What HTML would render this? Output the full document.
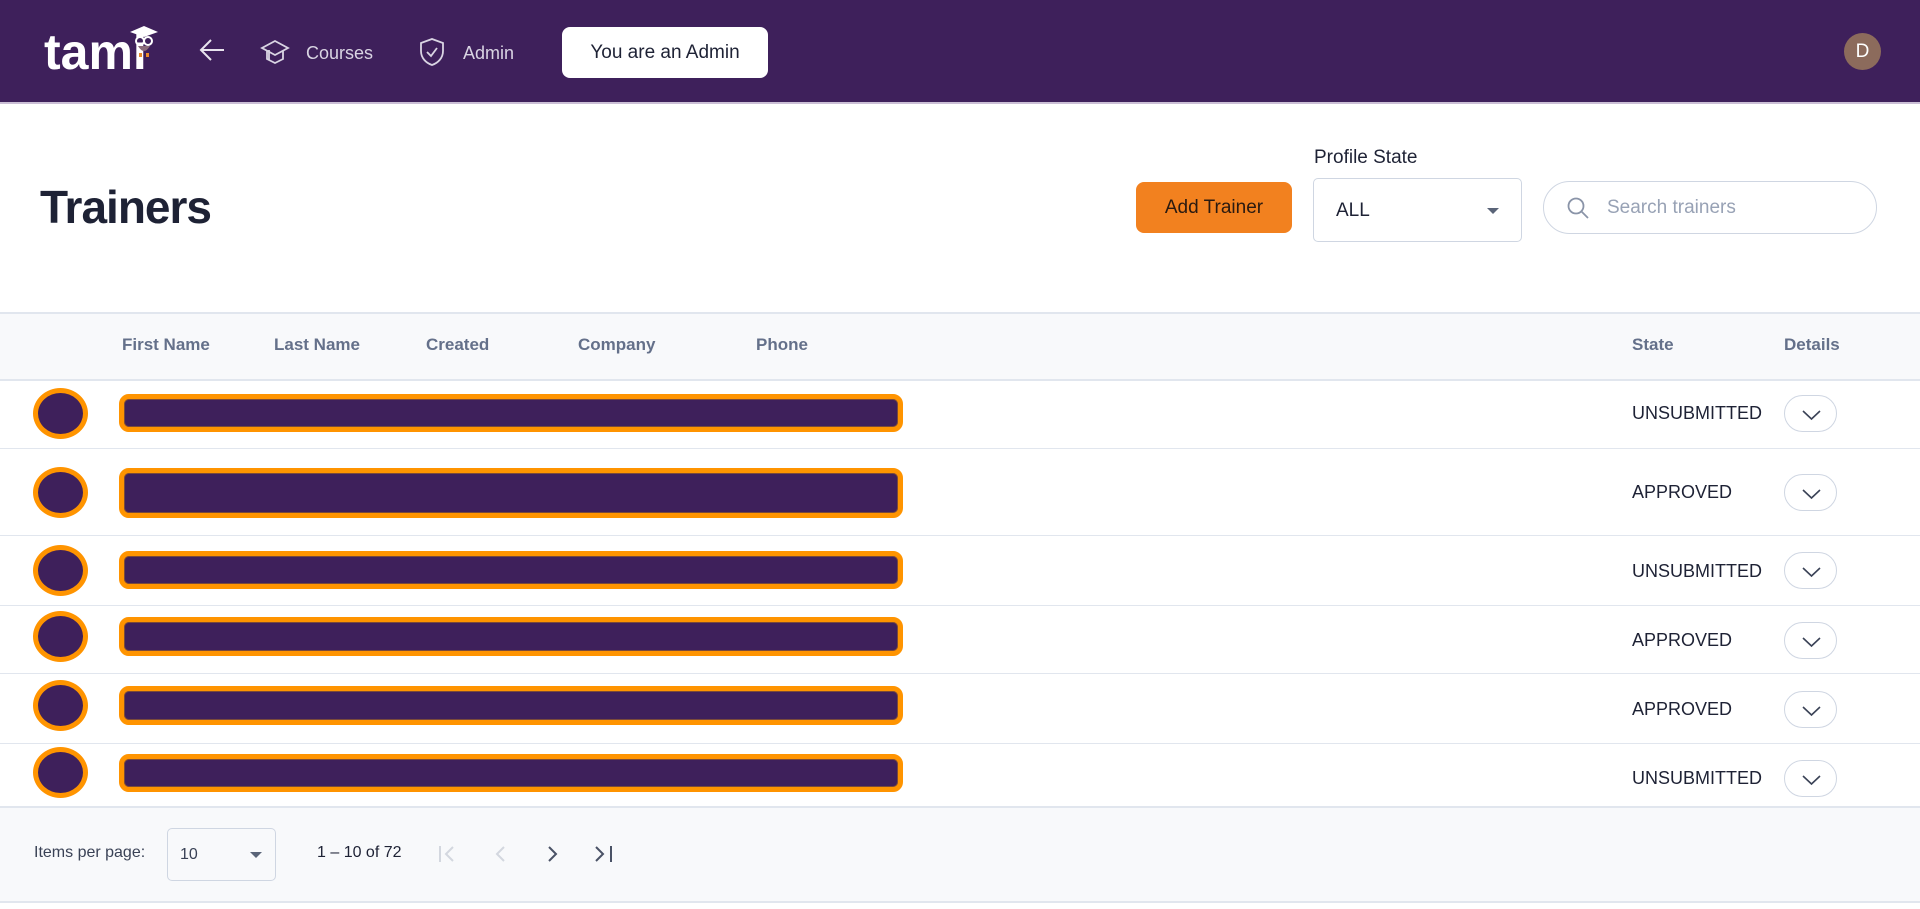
<!DOCTYPE html>
<html><head><meta charset="utf-8"><style>
*{box-sizing:border-box;margin:0;padding:0}
body{width:1920px;height:909px;overflow:hidden;background:#fff;font-family:"Liberation Sans",sans-serif;color:#1e2235;position:relative}
.a{position:absolute}
.hdr{left:0;top:0;width:1920px;height:104px;background:#3e205b;border-bottom:2px solid #cbbfd6}
.nav{color:#d9d4e3;font-size:18px}
.th{top:335px;font-size:17px;font-weight:bold;color:#64708a}
.row{left:0;width:1920px;border-bottom:1px solid #e1e6ee}
.circ{left:33px;width:55px;border:5px solid #ff9400;background:#3e205b;border-radius:50%}
.bar{left:119px;width:784px;border:5px solid #ff9400;background:#3e205b;border-radius:10px;box-shadow:inset 0 0 0 1px #7a4a3a}
.st{left:1632px;font-size:18px;color:#1e2235}
.det{left:1784px;width:53px;height:37px;border:1px solid #cfd6e2;border-radius:19px;background:#fff}
</style></head><body>
<div class="a hdr"></div>
<div class="a" style="left:44px;top:26px;color:#fff;font-size:50px;font-weight:bold;letter-spacing:0px;line-height:52px">tami</div>
<svg class="a" style="left:128px;top:24px" width="32" height="34" viewBox="0 0 32 34"><path d="M2 8 L16 2 L30 8 L16 13Z" fill="#fff"/><circle cx="12" cy="17" r="4" fill="none" stroke="#fff" stroke-width="2"/><circle cx="20" cy="17" r="4" fill="none" stroke="#fff" stroke-width="2"/><path d="M10 22 Q16 32 22 22" fill="#8a6a7a"/><rect x="11" y="29" width="3" height="4" fill="#e88a2a"/><rect x="18" y="29" width="3" height="4" fill="#e88a2a"/></svg>
<svg class="a" style="left:198px;top:38px" width="28" height="24" viewBox="0 0 28 24"><path d="M26 12H3M13 2L3 12l10 10" fill="none" stroke="#e8e4ee" stroke-width="2"/></svg>
<svg class="a" style="left:260px;top:38px" width="30" height="28" viewBox="0 0 30 28"><path d="M15 3 L28 10 L15 17 L2 10Z M7 13v8l8 4 8-4v-8 M9 12v10" fill="none" stroke="#d9d4e3" stroke-width="1.8"/></svg>
<div class="a nav" style="left:306px;top:43px">Courses</div>
<svg class="a" style="left:418px;top:37px" width="28" height="30" viewBox="0 0 28 30"><path d="M14 2 L25 6 V14 C25 21 20 26 14 28 C8 26 3 21 3 14 V6Z" fill="none" stroke="#d9d4e3" stroke-width="1.8"/><path d="M9 15l4 4 6-8" fill="none" stroke="#d9d4e3" stroke-width="1.8"/></svg>
<div class="a nav" style="left:463px;top:43px">Admin</div>
<div class="a" style="left:562px;top:27px;width:206px;height:51px;background:#fff;border-radius:8px;font-size:19px;line-height:51px;text-align:center;color:#1e2235">You are an Admin</div>
<div class="a" style="left:1844px;top:33px;width:37px;height:37px;border-radius:50%;background:#8c6b5c;color:#fff;font-size:19px;line-height:37px;text-align:center">D</div>

<div class="a" style="left:40px;top:180px;font-size:46px;font-weight:bold;letter-spacing:-1px">Trainers</div>
<div class="a" style="left:1136px;top:182px;width:156px;height:51px;background:#f2811f;border-radius:8px;font-size:19px;line-height:51px;text-align:center;color:#2a1a10;font-weight:500">Add Trainer</div>
<div class="a" style="left:1314px;top:147px;font-size:19px">Profile State</div>
<div class="a" style="left:1313px;top:178px;width:209px;height:64px;border:1px solid #cfd6e2;border-radius:5px;font-size:19px;line-height:64px;padding-left:22px">ALL</div>
<div class="a" style="left:1487px;top:208px;border-left:6px solid transparent;border-right:6px solid transparent;border-top:6px solid #5a6478"></div>
<div class="a" style="left:1543px;top:181px;width:334px;height:53px;border:1px solid #cfd6e2;border-radius:27px;font-size:19px;line-height:51px;padding-left:63px;color:#98a2b5">Search trainers</div>
<svg class="a" style="left:1566px;top:196px" width="24" height="24" viewBox="0 0 24 24"><circle cx="10" cy="10" r="7.5" fill="none" stroke="#8a94a8" stroke-width="1.8"/><path d="M15.5 15.5L22 22" stroke="#8a94a8" stroke-width="1.8"/></svg>

<div class="a" style="left:0;top:312px;width:1920px;height:69px;background:#f8f9fb;border-top:2px solid #e1e6ee;border-bottom:2px solid #e1e6ee"></div>
<div class="a th" style="left:122px">First Name</div>
<div class="a th" style="left:274px">Last Name</div>
<div class="a th" style="left:426px">Created</div>
<div class="a th" style="left:578px">Company</div>
<div class="a th" style="left:756px">Phone</div>
<div class="a th" style="left:1632px">State</div>
<div class="a th" style="left:1784px">Details</div>

<div class="a row" style="top:381px;height:68px"></div>
<div class="a row" style="top:449px;height:87px"></div>
<div class="a row" style="top:536px;height:70px"></div>
<div class="a row" style="top:606px;height:68px"></div>
<div class="a row" style="top:674px;height:70px"></div>

<div class="a circ" style="top:388px;height:51px"></div><div class="a bar" style="top:394px;height:38px"></div>
<div class="a circ" style="top:467px;height:51px"></div><div class="a bar" style="top:468px;height:50px"></div>
<div class="a circ" style="top:545px;height:51px"></div><div class="a bar" style="top:551px;height:38px"></div>
<div class="a circ" style="top:611px;height:51px"></div><div class="a bar" style="top:617px;height:39px"></div>
<div class="a circ" style="top:680px;height:51px"></div><div class="a bar" style="top:686px;height:39px"></div>
<div class="a circ" style="top:747px;height:51px"></div><div class="a bar" style="top:754px;height:38px"></div>

<div class="a st" style="top:403px">UNSUBMITTED</div>
<div class="a st" style="top:482px">APPROVED</div>
<div class="a st" style="top:561px">UNSUBMITTED</div>
<div class="a st" style="top:630px">APPROVED</div>
<div class="a st" style="top:699px">APPROVED</div>
<div class="a st" style="top:768px">UNSUBMITTED</div>
<svg width="0" height="0" style="position:absolute"><defs><symbol id="chev" viewBox="0 0 53 37"><path d="M18 15l8.5 8 8.5-8" fill="none" stroke="#3a4256" stroke-width="1.6"/></symbol></defs></svg>
<div class="a det" style="top:395px"><svg width="53" height="37"><use href="#chev"/></svg></div>
<div class="a det" style="top:474px"><svg width="53" height="37"><use href="#chev"/></svg></div>
<div class="a det" style="top:552px"><svg width="53" height="37"><use href="#chev"/></svg></div>
<div class="a det" style="top:622px"><svg width="53" height="37"><use href="#chev"/></svg></div>
<div class="a det" style="top:691px"><svg width="53" height="37"><use href="#chev"/></svg></div>
<div class="a det" style="top:760px"><svg width="53" height="37"><use href="#chev"/></svg></div>

<div class="a" style="left:0;top:806px;width:1920px;height:97px;background:#f8f9fb;border-top:2px solid #e1e6ee;border-bottom:2px solid #e1e6ee"></div>
<div class="a" style="left:34px;top:844px;font-size:16px;color:#3a4256">Items per page:</div>
<div class="a" style="left:167px;top:828px;width:109px;height:53px;border:1px solid #cfd6e2;border-radius:5px;font-size:16px;line-height:51px;padding-left:12px;color:#3a4256">10</div>
<div class="a" style="left:250px;top:852px;border-left:6px solid transparent;border-right:6px solid transparent;border-top:6px solid #5a6478"></div>
<div class="a" style="left:317px;top:844px;font-size:16px;color:#1e2235">1 – 10 of 72</div>
<svg class="a" style="left:436px;top:842px" width="180" height="24" viewBox="0 0 180 24"><path d="M4 4v16M17 5l-7 7 7 7" fill="none" stroke="#d3d7df" stroke-width="2"/><path d="M68 5l-7 7 7 7" fill="none" stroke="#d3d7df" stroke-width="2"/><path d="M113 5l7 7-7 7" fill="none" stroke="#4a5266" stroke-width="2"/><path d="M160 5l7 7-7 7M175 4v16" fill="none" stroke="#4a5266" stroke-width="2"/></svg>
</body></html>
